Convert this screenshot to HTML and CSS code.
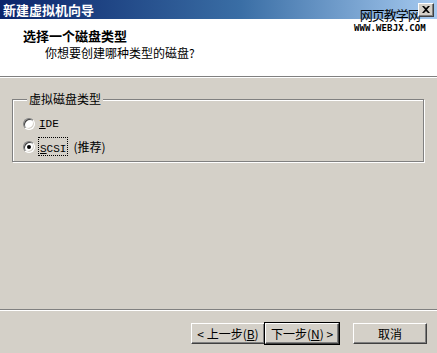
FILE: index.html
```html
<!DOCTYPE html>
<html>
<head>
  <meta charset="utf-8">
  <title>新建虚拟机向导</title>
  <link rel="stylesheet" href="styles.css">
</head>
<body>
  <div class="window">
    <div class="titlebar">
      <span class="title">新建虚拟机向导</span>
      <div class="mark">
        <span class="mark-cn">网页教学网</span>
        <span class="mark-url">WWW.WEBJX.COM</span>
      </div>
      <button class="close">
        <svg width="8" height="7" viewBox="0 0 8 7"><path d="M0 0h2l2 2 2-2h2L5 3.5 8 7H6L4 5 2 7H0l3-3.5z" fill="#000"/></svg>
      </button>
    </div>

    <div class="header">
      <div class="header-title">选择一个磁盘类型</div>
      <div class="header-sub">你想要创建哪种类型的磁盘?</div>
    </div>

    <div class="main">
      <fieldset class="group">
        <legend>虚拟磁盘类型</legend>
        <label class="radio">
          <span class="dot"></span>
          <span class="latin"><u>I</u>DE</span>
        </label>
        <label class="radio">
          <span class="dot checked"></span>
          <span class="focus"><span class="latin"><u>S</u>CSI</span></span>
          <span class="note">(推荐)</span>
        </label>
      </fieldset>
    </div>

    <div class="separator"></div>

    <div class="footer">
      <div class="pair">
        <button class="btn">&lt; 上一步(<u>B</u>)</button>
        <button class="btn default">下一步(<u>N</u>) &gt;</button>
      </div>
      <button class="btn">取消</button>
    </div>
  </div>
</body>
</html>
```

FILE: styles.css
```css
html, body {
  margin: 0;
  height: 100%;
}
body {
  background: #d4d0c8;
  font-family: "Noto Sans CJK SC", "Liberation Sans", sans-serif;
  font-size: 12px;
  color: #000;
  overflow: hidden;
}
.window {
  width: 437px;
  height: 353px;
  display: flex;
  flex-direction: column;
}

/* title bar */
.titlebar {
  height: 19px;
  flex: none;
  display: flex;
  align-items: center;
  background: linear-gradient(to right, #0a246a, #3a6ea5 55%, #a6caf0);
  position: relative;
}
.title {
  color: #fff;
  font-weight: bold;
  font-size: 13px;
  line-height: 19px;
  padding-left: 3px;
}
.mark {
  position: absolute;
  left: 354px;
  top: 8px;
  display: flex;
  flex-direction: column;
  align-items: center;
  z-index: 1;
}
.mark-cn {
  font-size: 13px;
  line-height: 14px;
  color: #000;
  letter-spacing: -1px;
}
.mark-url {
  font-family: "DejaVu Sans Mono", monospace;
  font-weight: bold;
  font-size: 9px;
  line-height: 10px;
  margin-top: 1px;
  letter-spacing: 0.1px;
}
.close {
  margin-left: auto;
  margin-right: 3px;
  width: 16px;
  height: 14px;
  padding: 0;
  display: flex;
  align-items: center;
  justify-content: center;
  background: #d4d0c8;
  border: 1px solid;
  border-color: #fff #404040 #404040 #fff;
  box-shadow: inset -1px -1px #808080;
  position: relative;
  z-index: 2;
}

/* header */
.header {
  height: 58px;
  flex: none;
  background: #fff;
  border-bottom: 1px solid #808080;
  box-shadow: 0 1px 0 #fff;
  box-sizing: border-box;
  padding: 9px 0 0 23px;
}
.header-title {
  font-weight: bold;
  font-size: 13px;
  line-height: 15px;
}
.header-sub {
  padding-left: 22px;
  margin-top: 2px;
  line-height: 15px;
}

/* body */
.main {
  flex: 1;
  padding: 15px 13px 0 12px;
}
.group {
  margin: 0;
  padding: 6px 10px 3px 10px;
  border: 1px solid #808080;
  box-shadow: 1px 1px 0 #fff, inset 1px 1px 0 #fff;
}
.group legend {
  padding: 0 2px;
  margin-left: 4px;
  line-height: 14px;
  background: #d4d0c8;
}
.radio {
  display: flex;
  align-items: center;
  height: 23px;
}
.dot {
  width: 12px;
  height: 12px;
  box-sizing: border-box;
  border-radius: 50%;
  background: #fff;
  border: 1px solid;
  border-color: #808080 #fff #fff #808080;
  box-shadow: inset 1px 1px 0 #404040, inset -1px -1px 0 #d4d0c8;
  margin-right: 4px;
  position: relative;
}
.dot.checked::after {
  content: "";
  position: absolute;
  left: 3px;
  top: 3px;
  width: 4px;
  height: 4px;
  border-radius: 50%;
  background: #000;
}
.latin {
  font-family: "Liberation Mono", monospace;
  font-size: 11px;
}
.focus {
  outline: 1px dotted #000;
  padding: 0 1px;
}
.note {
  margin-left: 6px;
}

/* footer */
.separator {
  flex: none;
  border-top: 1px solid #808080;
  border-bottom: 1px solid #fff;
}
.footer {
  height: 42px;
  flex: none;
  display: flex;
  justify-content: flex-end;
  padding: 12px 10px 0 0;
  box-sizing: border-box;
  gap: 14px;
}
.pair {
  display: flex;
}
.btn {
  width: 74px;
  height: 21px;
  padding: 0;
  font-family: "Noto Sans CJK SC", sans-serif;
  font-size: 12px;
  background: #d4d0c8;
  border: 1px solid;
  border-color: #fff #404040 #404040 #fff;
  box-shadow: inset -1px -1px #808080;
}
.btn.default {
  outline: 1px solid #000;
  outline-offset: 0;
}
```
